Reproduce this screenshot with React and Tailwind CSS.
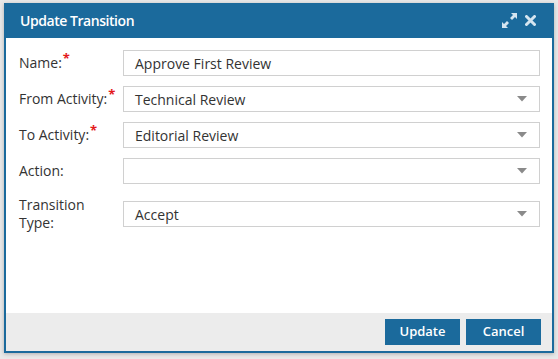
import { Fragment } from 'react';

const Caret = () => (
  <svg width="10" height="6" viewBox="0 0 10 6" className="shrink-0">
    <path d="M0 0 L10 0 L5 5.5 Z" fill="#8a8a8a" />
  </svg>
);

function Field({ label, required, value, select, tall }) {
  return (
    <div className={`flex items-center ${tall ? 'h-[40px]' : 'h-[26px]'}`}>
      <div className="w-[104px] text-[14px] leading-[18px] text-[#333]">
        {label}
        {required && (
          <span className="relative -top-[5px] ml-[1px] text-[13px] font-bold leading-none text-[#e3191c]">*</span>
        )}
      </div>
      <div className="flex h-[26px] w-[417px] items-center border border-[#d0d0d0] bg-white pl-[11px] pr-[12px] text-[14px] text-[#333]">
        <span className="flex-1">{value}</span>
        {select && <Caret />}
      </div>
    </div>
  );
}

export default function App() {
  return (
    <div
      className="h-[359px] w-[558px] bg-[#e9e9e9] pl-[4px] pt-[3px]"
      style={{ fontFamily: '"Open Sans", "Noto Sans", sans-serif' }}
    >
      <div className="flex h-[350px] w-[550px] flex-col border-2 border-[#1b6a9c] bg-white shadow-[0_1px_4px_rgba(0,0,0,0.25)]">
        <div className="-mt-[2px] flex h-[35px] items-center bg-[#1b6a9c] pl-[14px] pr-[16px]">
          <span className="flex-1 text-[14px] font-semibold tracking-[-0.45px] text-white">Update Transition</span>
          <svg width="15" height="15" viewBox="0 0 15 15" className="mr-[8px]">
            <g fill="#d5e5f0">
              <path d="M9 0 H15 V6 L13 4 L10 7 L8 5 L11 2 Z" />
              <path d="M6 15 H0 V9 L2 11 L5 8 L7 10 L4 13 Z" />
            </g>
          </svg>
          <svg width="11" height="11" viewBox="0 0 11 11">
            <path d="M1.5 1.5 L9.5 9.5 M9.5 1.5 L1.5 9.5" stroke="#d5e5f0" strokeWidth="3" strokeLinecap="round" />
          </svg>
        </div>
        <div className="flex flex-1 flex-col gap-[10px] pl-[13px] pt-[12px]">
          <Field label="Name:" required value="Approve First Review" />
          <Field label="From Activity:" required value="Technical Review" select />
          <Field label="To Activity:" required value="Editorial Review" select />
          <Field label="Action:" value="" select />
          <Field label={<Fragment>Transition<br />Type:</Fragment>} value="Accept" select tall />
        </div>
        <div className="flex h-[38px] items-center justify-end gap-[6px] bg-[#ececec] pr-[11px]">
          <button className="h-[26px] w-[75px] bg-[#1b6a9c] text-[13px] font-semibold text-white">Update</button>
          <button className="h-[26px] w-[75px] bg-[#1b6a9c] text-[13px] font-semibold text-white">Cancel</button>
        </div>
      </div>
    </div>
  );
}
